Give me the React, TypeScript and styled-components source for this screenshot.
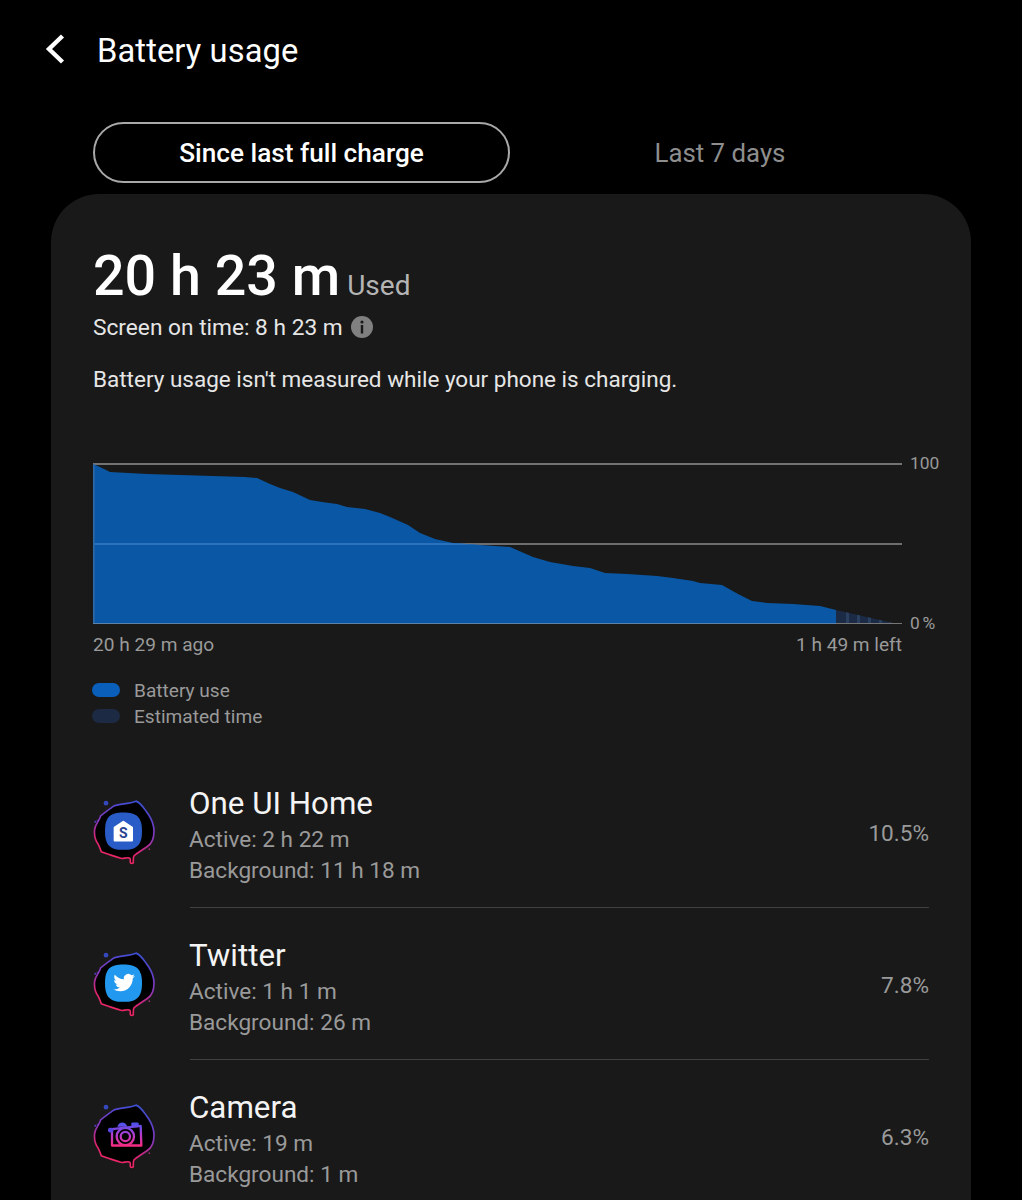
import React from "react";
import styled, { createGlobalStyle } from "styled-components";

const GlobalStyle = createGlobalStyle`
  html, body { margin: 0; padding: 0; background: #000; }
  body { font-family: Roboto, "Liberation Sans", sans-serif; }
  #root { height: 1200px; overflow: hidden; }
`;

const Page = styled.div`
  width: 1022px;
  height: 1200px;
  background: #000;
  color: #fff;
  overflow: hidden;
`;

const Header = styled.header`
  height: 100px;
  display: flex;
  align-items: center;
  padding-left: 44px;
  gap: 31px;
`;

const Back = styled.svg`
  width: 22px;
  height: 32px;
  display: block;
  margin-top: -3px;
`;

const Title = styled.h1`
  margin: 0;
  padding-top: 1px;
  font-size: 32.7px;
  font-weight: 400;
  letter-spacing: 0.1px;
`;

const Tabs = styled.nav`
  margin: 22px 0 11px 93px;
  width: 837px;
  display: grid;
  grid-template-columns: 417px 420px;
`;

const Tab = styled.div<{ $active?: boolean }>`
  height: 61px;
  box-sizing: border-box;
  display: flex;
  align-items: center;
  justify-content: center;
  padding-top: 1px;
  border-radius: 31px;
  font-size: ${(p) => (p.$active ? "26.2px" : "25.8px")};
  font-weight: ${(p) => (p.$active ? 500 : 400)};
  color: ${(p) => (p.$active ? "#fff" : "#8e8e8e")};
  border: ${(p) => (p.$active ? "2px solid #a8a8a8" : "2px solid transparent")};
`;

const Card = styled.main`
  margin-left: 51px;
  width: 920px;
  box-sizing: border-box;
  padding: 47px 42px 0;
  background: #191919;
  border-radius: 48px 48px 0 0;
`;

const Usage = styled.div`
  display: flex;
  align-items: baseline;
  gap: 7px;
  height: 70px;
`;

const UsageValue = styled.span`
  font-size: 55.6px;
  font-weight: 500;
  line-height: 70px;
`;

const UsageUnit = styled.span`
  font-size: 28px;
  color: #b4b4b4;
`;

const ScreenOn = styled.div`
  display: flex;
  align-items: center;
  gap: 8px;
  margin-top: 3px;
  font-size: 22.7px;
  line-height: 28px;
  color: #e6e6e6;
`;

const InfoIcon = styled.svg`
  width: 22px;
  height: 22px;
  display: block;
  margin-top: -2px;
`;

const Note = styled.p`
  margin: 23px 0 0;
  font-size: 22.5px;
  line-height: 28px;
  color: #e6e6e6;
`;

const ChartRow = styled.div`
  margin: 69px -12px 0 0;
  display: flex;
  gap: 8px;
`;

const ChartSvg = styled.svg`
  width: 809px;
  height: 162px;
  display: block;
  flex: none;
`;

const AxisLabels = styled.div`
  height: 180px;
  margin: -9px 0 -8px;
  display: flex;
  flex-direction: column;
  justify-content: space-between;
  font-size: 17.4px;
  line-height: 20px;
  word-spacing: -1.5px;
  color: #9a9a9a;
`;

const TimeSpan = styled.div`
  width: 809px;
  margin-top: 7px;
  display: flex;
  justify-content: space-between;
  font-size: 19.1px;
  line-height: 26px;
  color: #9a9a9a;
`;

const Legend = styled.ul`
  list-style: none;
  margin: 19px 0 0;
  padding: 0;
`;

const LegendItem = styled.li`
  display: flex;
  align-items: center;
  gap: 14px;
  height: 26px;
  font-size: 19.1px;
  color: #9a9a9a;
`;

const Swatch = styled.span<{ $color: string }>`
  width: 28px;
  height: 14px;
  margin-left: -1px;
  border-radius: 7px;
  background: ${(p) => p.$color};
`;

const AppList = styled.ul`
  list-style: none;
  margin: 27px 0 0;
  padding: 0;
`;

const AppRow = styled.li`
  height: 152px;
  box-sizing: border-box;
  display: flex;
  align-items: stretch;
`;

const AppIconSlot = styled.div`
  width: 98px;
  flex: none;
  display: flex;
  align-items: center;
  margin-left: -1px;
  padding-top: 2px;
  box-sizing: border-box;
`;

const AppIconSvg = styled.svg`
  width: 67px;
  height: 77px;
  display: block;
`;

const AppBody = styled.div<{ $divided: boolean }>`
  flex: 1;
  box-sizing: border-box;
  padding-top: 4px;
  display: flex;
  align-items: center;
  justify-content: space-between;
  border-bottom: ${(p) => (p.$divided ? "1px solid #414141" : "1px solid transparent")};
`;

const AppText = styled.div`
  display: flex;
  flex-direction: column;
  padding-top: 3px;
  margin-left: -1px;
`;

const AppName = styled.div`
  font-size: 31.3px;
  line-height: 38px;
  margin-bottom: 1px;
  color: #f4f4f4;
`;

const AppDetail = styled.div`
  font-size: 22.6px;
  line-height: 31px;
  color: #9a9a9a;
`;

const AppShare = styled.div`
  font-size: 22.6px;
  color: #9a9a9a;
`;

const CHART_X = 93;
const CHART_Y = 462;
const usedPoints = [
  [93, 464], [100, 467], [110, 472], [147, 474], [213, 476], [245, 477], [257, 478],
  [270, 484], [280, 488], [293, 492], [310, 500], [322, 502], [337, 504], [347, 507],
  [365, 509], [380, 513], [390, 517], [408, 525], [420, 533], [435, 539], [453, 543],
  [480, 545], [510, 547], [533, 557], [550, 562], [573, 566], [590, 568], [605, 573],
  [627, 574], [657, 576], [673, 578], [693, 581], [700, 583], [722, 585], [738, 594],
  [752, 601], [767, 603], [793, 604], [820, 606], [836, 610],
];
const estimatePoints = [[836, 610], [893, 623]];

const toPath = (pts: number[][], endX: number, startX: number) =>
  `M${startX - CHART_X} 162 ` +
  pts.map(([x, y]) => `L${x - CHART_X} ${y - CHART_Y}`).join(" ") +
  ` L${endX - CHART_X} 162 Z`;

const usedPath = toPath(usedPoints, 836, 93);
const estimatePath = toPath(estimatePoints, 893, 836);

const BatteryChart = () => (
  <ChartSvg viewBox="0 0 809 162">
    <defs>
      <clipPath id="estimate-clip">
        <path d={estimatePath} />
      </clipPath>
      <clipPath id="used-clip">
        <path d={usedPath} />
      </clipPath>
    </defs>
    <rect x="0" y="1" width="809" height="2" fill="#737373" />
    <rect x="0" y="81" width="809" height="2" fill="#6e6e6e" />
    <path d={usedPath} fill="#0a58a5" />
    <rect x="0" y="81" width="809" height="2" fill="#2a70ba" clipPath="url(#used-clip)" />
    <path d={estimatePath} fill="#1b2b45" />
    <g clipPath="url(#estimate-clip)" fill="#2b405e">
      {[754, 765, 776, 787, 797].map((x) => (
        <rect key={x} x={x - 1} y="140" width="3" height="22" />
      ))}
    </g>
    <rect x="0" y="2" width="1.5" height="160" fill="#2f6aa8" />
    <rect x="0" y="161" width="809" height="2" fill="#5d82aa" />
    <rect x="743" y="161" width="66" height="2" fill="#767676" />
  </ChartSvg>
);

// Shared ink-blot ring behind every launcher icon
const SPLAT =
  "M198 62 C212 66 222 84 234 100 C246 118 252 134 252 152 C252 176 244 190 232 198 " +
  "C218 208 204 216 192 226 C189 230 190 236 190 246 C190 250 181 250 181 246 C181 238 182 232 176 232 " +
  "C166 230 158 238 148 232 C134 226 112 222 94 214 C90 204 88 194 80 184 C74 172 72 160 74 146 " +
  "C76 130 88 122 92 106 C104 96 118 86 132 76 C152 70 176 70 198 62 Z";

const IconFrame = ({ id, children }: { id: string; children: React.ReactNode }) => (
  <AppIconSvg viewBox="66 44 201 230">
    <defs>
      <linearGradient id={`ring-${id}`} x1="0.6" y1="0" x2="0.3" y2="1">
        <stop offset="0" stopColor="#3f4fd6" />
        <stop offset="0.45" stopColor="#8a35b8" />
        <stop offset="0.75" stopColor="#e0246e" />
        <stop offset="1" stopColor="#f0285f" />
      </linearGradient>
    </defs>
    <path d={SPLAT} fill="#000" stroke={`url(#ring-${id})`} strokeWidth="5" strokeLinejoin="round" />
    <circle cx="108" cy="68" r="7" fill="#3448c0" />
    <circle cx="76" cy="124" r="3" fill="#5a3cc0" />
    <circle cx="82" cy="120" r="2" fill="#5a3cc0" />
    <circle cx="238" cy="206" r="2.5" fill="#a03070" />
    {children}
  </AppIconSvg>
);

const Squircle = ({ fill }: { fill: string }) => (
  <path
    fill={fill}
    d="M160 96 C200 96 216 110 216 152 C216 194 200 208 160 208 C120 208 105 194 105 152 C105 110 120 96 160 96 Z"
  />
);

const HomeIcon = () => (
  <IconFrame id="home">
    <Squircle fill="#2a5cc8" />
    <path
      fill="#fff"
      stroke="#fff"
      strokeWidth="6"
      strokeLinejoin="round"
      d="M134 141 L160 124 L186 141 L186 180 L134 180 Z"
    />
    <text
      x="160"
      y="172"
      textAnchor="middle"
      fontFamily="Roboto, sans-serif"
      fontWeight="700"
      fontSize="42"
      fill="#27438f"
    >
      S
    </text>
  </IconFrame>
);

const TwitterIcon = () => (
  <IconFrame id="twitter">
    <Squircle fill="#2299ee" />
    <g transform="translate(130 118) scale(2.7)">
      <path
        fill="#fff"
        d="M23.953 4.57a10 10 0 01-2.825.775 4.958 4.958 0 002.163-2.723c-.951.555-2.005.959-3.127 1.184a4.92 4.92 0 00-8.384 4.482C7.69 8.095 4.067 6.13 1.64 3.162a4.822 4.822 0 00-.666 2.475c0 1.71.87 3.213 2.188 3.995a4.904 4.904 0 01-2.228-.616v.06a4.923 4.923 0 003.946 4.827 4.996 4.996 0 01-2.212.085 4.936 4.936 0 004.604 3.417 9.867 9.867 0 01-6.102 2.105c-.39 0-.779-.023-1.17-.067a13.995 13.995 0 007.557 2.209c9.053 0 13.998-7.496 13.998-13.985 0-.21 0-.42-.015-.63A9.935 9.935 0 0024 4.59z"
      />
    </g>
  </IconFrame>
);

const CameraIcon = () => (
  <IconFrame id="camera">
    <defs>
      <linearGradient id="lens" gradientUnits="userSpaceOnUse" x1="160" y1="112" x2="160" y2="188">
        <stop offset="0" stopColor="#3f55f0" />
        <stop offset="0.5" stopColor="#b03cd0" />
        <stop offset="1" stopColor="#ff2a78" />
      </linearGradient>
    </defs>
    <g fill="none" stroke="url(#lens)" strokeWidth="7" strokeLinejoin="round">
      <path d="M126 134 L212 124 L214 183 L126 183 Z" />
      <circle cx="166" cy="156" r="26" />
      <circle cx="166" cy="156" r="14" />
    </g>
    <path d="M142 127 C146 110 168 110 172 127 Z" fill="url(#lens)" />
    <rect x="184" y="114" width="22" height="14" rx="3" fill="url(#lens)" />
    <rect x="114" y="130" width="16" height="14" rx="6" fill="#5a45e0" />
  </IconFrame>
);

const apps = [
  { name: "One UI Home", active: "2 h 22 m", background: "11 h 18 m", share: "10.5%", Icon: HomeIcon },
  { name: "Twitter", active: "1 h 1 m", background: "26 m", share: "7.8%", Icon: TwitterIcon },
  { name: "Camera", active: "19 m", background: "1 m", share: "6.3%", Icon: CameraIcon },
];

export default function App() {
  return (
    <Page>
      <GlobalStyle />
      <Header>
        <Back viewBox="0 0 22 32">
          <path d="M18.5 3 L5 16 L18.5 29" fill="none" stroke="#fff" strokeWidth="4.4" />
        </Back>
        <Title>Battery usage</Title>
      </Header>
      <Tabs>
        <Tab $active>Since last full charge</Tab>
        <Tab>Last 7 days</Tab>
      </Tabs>
      <Card>
        <Usage>
          <UsageValue>20 h 23 m</UsageValue>
          <UsageUnit>Used</UsageUnit>
        </Usage>
        <ScreenOn>
          Screen on time: 8 h 23 m
          <InfoIcon viewBox="0 0 22 22">
            <circle cx="11" cy="11" r="11" fill="#808080" />
            <circle cx="11" cy="6" r="1.6" fill="#191919" />
            <rect x="9.8" y="9" width="2.4" height="8.5" fill="#191919" />
          </InfoIcon>
        </ScreenOn>
        <Note>Battery usage isn't measured while your phone is charging.</Note>
        <ChartRow>
          <BatteryChart />
          <AxisLabels>
            <span>100</span>
            <span>0 %</span>
          </AxisLabels>
        </ChartRow>
        <TimeSpan>
          <span>20 h 29 m ago</span>
          <span>1 h 49 m left</span>
        </TimeSpan>
        <Legend>
          <LegendItem>
            <Swatch $color="#0a5fbb" />
            Battery use
          </LegendItem>
          <LegendItem>
            <Swatch $color="#1c2a43" />
            Estimated time
          </LegendItem>
        </Legend>
        <AppList>
          {apps.map(({ name, active, background, share, Icon }, i) => (
            <AppRow key={name}>
              <AppIconSlot>
                <Icon />
              </AppIconSlot>
              <AppBody $divided={i < apps.length - 1}>
                <AppText>
                  <AppName>{name}</AppName>
                  <AppDetail>Active: {active}</AppDetail>
                  <AppDetail>Background: {background}</AppDetail>
                </AppText>
                <AppShare>{share}</AppShare>
              </AppBody>
            </AppRow>
          ))}
        </AppList>
      </Card>
    </Page>
  );
}
